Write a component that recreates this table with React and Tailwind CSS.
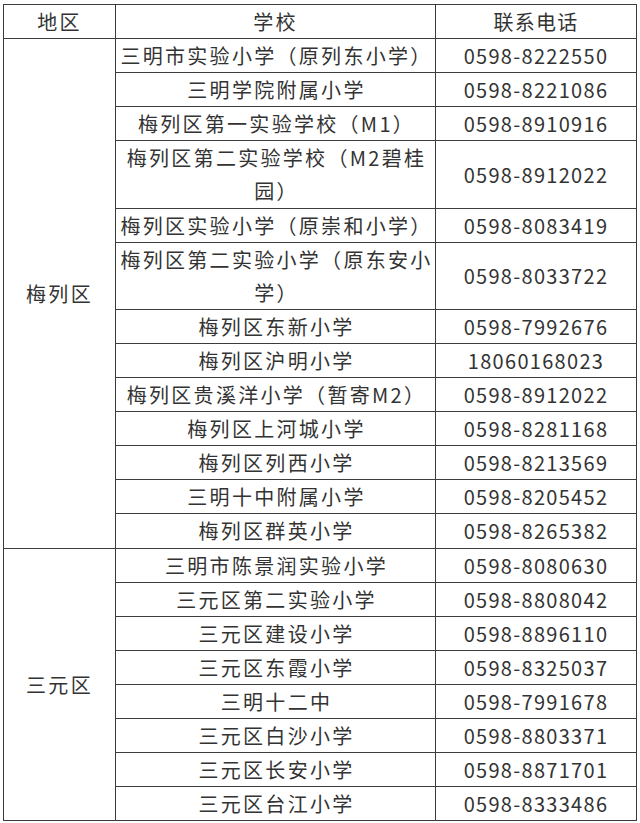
const meilie = [
  ["三明市实验小学（原列东小学）", "0598-8222550"],
  ["三明学院附属小学", "0598-8221086"],
  ["梅列区第一实验学校（M1）", "0598-8910916"],
  ["梅列区第二实验学校（M2碧桂园）", "0598-8912022"],
  ["梅列区实验小学（原崇和小学）", "0598-8083419"],
  ["梅列区第二实验小学（原东安小学）", "0598-8033722"],
  ["梅列区东新小学", "0598-7992676"],
  ["梅列区沪明小学", "18060168023"],
  ["梅列区贵溪洋小学（暂寄M2）", "0598-8912022"],
  ["梅列区上河城小学", "0598-8281168"],
  ["梅列区列西小学", "0598-8213569"],
  ["三明十中附属小学", "0598-8205452"],
  ["梅列区群英小学", "0598-8265382"],
];

const sanyuan = [
  ["三明市陈景润实验小学", "0598-8080630"],
  ["三元区第二实验小学", "0598-8808042"],
  ["三元区建设小学", "0598-8896110"],
  ["三元区东霞小学", "0598-8325037"],
  ["三明十二中", "0598-7991678"],
  ["三元区白沙小学", "0598-8803371"],
  ["三元区长安小学", "0598-8871701"],
  ["三元区台江小学", "0598-8333486"],
];

const cell = "border border-[#3c3c3c] text-center align-middle p-0";

function Group({ name, rows }) {
  return rows.map(([school, phone], i) => (
    <tr key={school}>
      {i === 0 && (
        <td rowSpan={rows.length} className={`${cell} tracking-[2.3px]`}>
          {name}
        </td>
      )}
      <td className={`${cell} pl-[2px] tracking-[2.3px]`}>{school}</td>
      <td className={`${cell} tracking-[1.3px]`}>{phone}</td>
    </tr>
  ));
}

export default function App() {
  return (
    <div className="w-[640px] h-[823px] bg-white pt-[4px] pl-[3px]">
      <table
        className="table-fixed border-collapse w-[633px] text-[20px] leading-[33.1px] text-[#333]"
        style={{ fontFamily: '"Noto Sans CJK SC", "Noto Sans", sans-serif' }}
      >
        <colgroup>
          <col className="w-[112px]" />
          <col className="w-[320px]" />
          <col className="w-[201px]" />
        </colgroup>
        <thead>
          <tr>
            <th className={`${cell} font-normal tracking-[2.3px]`}>地区</th>
            <th className={`${cell} font-normal tracking-[2.3px]`}>学校</th>
            <th className={`${cell} font-normal tracking-[1.3px]`}>联系电话</th>
          </tr>
        </thead>
        <tbody>
          <Group name="梅列区" rows={meilie} />
          <Group name="三元区" rows={sanyuan} />
        </tbody>
      </table>
    </div>
  );
}
